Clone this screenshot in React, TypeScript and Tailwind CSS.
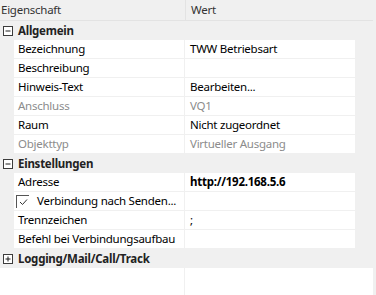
import { Fragment } from "react";

type Row =
  | { kind: "cat"; label: string; open: boolean }
  | { kind: "prop"; name: string; value?: string; disabled?: boolean; bold?: boolean }
  | { kind: "check"; name: string };

const rows: Row[] = [
  { kind: "cat", label: "Allgemein", open: true },
  { kind: "prop", name: "Bezeichnung", value: "TWW Betriebsart" },
  { kind: "prop", name: "Beschreibung", value: "" },
  { kind: "prop", name: "Hinweis-Text", value: "Bearbeiten..." },
  { kind: "prop", name: "Anschluss", value: "VQ1", disabled: true },
  { kind: "prop", name: "Raum", value: "Nicht zugeordnet" },
  { kind: "prop", name: "Objekttyp", value: "Virtueller Ausgang", disabled: true },
  { kind: "cat", label: "Einstellungen", open: true },
  { kind: "prop", name: "Adresse", value: "http://192.168.5.6", bold: true },
  { kind: "check", name: "Verbindung nach Senden..." },
  { kind: "prop", name: "Trennzeichen", value: ";" },
  { kind: "prop", name: "Befehl bei Verbindungsaufbau", value: "" },
  { kind: "cat", label: "Logging/Mail/Call/Track", open: false },
];

function ToggleBox({ open }: { open: boolean }) {
  return (
    <svg width="10" height="10" viewBox="0 0 10 10" className="shrink-0">
      <rect x="0.5" y="0.5" width="9" height="9" fill="white" stroke="#3c3c3c" />
      <line x1="2.5" y1="5" x2="7.5" y2="5" stroke="#1e1e1e" />
      {!open && <line x1="5" y1="2.5" x2="5" y2="7.5" stroke="#1e1e1e" />}
    </svg>
  );
}

export default function App() {
  return (
    <div
      className="w-[376px] h-[295px] flex flex-col bg-[#f0f0f0] overflow-hidden text-[11.5px] tracking-[-0.25px] leading-none text-black whitespace-nowrap"
      style={{ fontFamily: '"Noto Sans", "Open Sans", sans-serif' }}
    >
      {/* header */}
      <div className="flex">
        <div className="w-[373px] h-[21px] flex border-b border-[#e3e3e3] text-[#333]">
          <div className="w-[186px] border-r border-[#e3e3e3] flex items-center pl-[1px]">Eigenschaft</div>
          <div className="flex items-center pl-[5px]">Wert</div>
        </div>
      </div>

      {rows.map((r, i) => (
        <Fragment key={i}>
          {r.kind === "cat" && (
            <div className="h-[19px] flex items-center">
              <div className="w-[18px] pl-[3px] flex items-center">
                <ToggleBox open={r.open} />
              </div>
              <span className="font-bold text-[#222]">{r.label}</span>
            </div>
          )}
          {r.kind === "prop" && (
            <div className="h-[19px] flex">
              <div className="w-[14px]" />
              <div
                className={`w-[170px] h-[18px] bg-white flex items-center pl-[4px] ${r.disabled ? "text-[#8c8c8c]" : ""}`}
              >
                {r.name}
              </div>
              <div
                className={`ml-[1px] w-[170px] h-[18px] bg-white flex items-center pl-[5px] ${r.disabled ? "text-[#8c8c8c]" : ""} ${r.bold ? "font-bold" : ""}`}
              >
                {r.value}
              </div>
            </div>
          )}
          {r.kind === "check" && (
            <div className="h-[19px] flex">
              <div className="w-[14px]" />
              <div className="w-[170px] h-[18px] bg-white flex items-center pl-[2px] z-10">
                <span className="w-[13px] h-[13px] border-l border-t border-[#555] flex items-center justify-center mr-[8px] shrink-0">
                  <svg width="9" height="8" viewBox="0 0 9 8">
                    <path d="M1 4 L3.5 6.5 L8 1.5" fill="none" stroke="#333" strokeWidth="1" />
                  </svg>
                </span>
                {r.name}
              </div>
              <div className="ml-[1px] w-[170px] h-[18px] bg-white" />
            </div>
          )}
        </Fragment>
      ))}

      {/* empty area */}
      <div className="flex-1 flex">
        <div className="w-[184px] bg-white" />
        <div className="w-px" />
        <div className="w-[188px] bg-white" />
      </div>
    </div>
  );
}
